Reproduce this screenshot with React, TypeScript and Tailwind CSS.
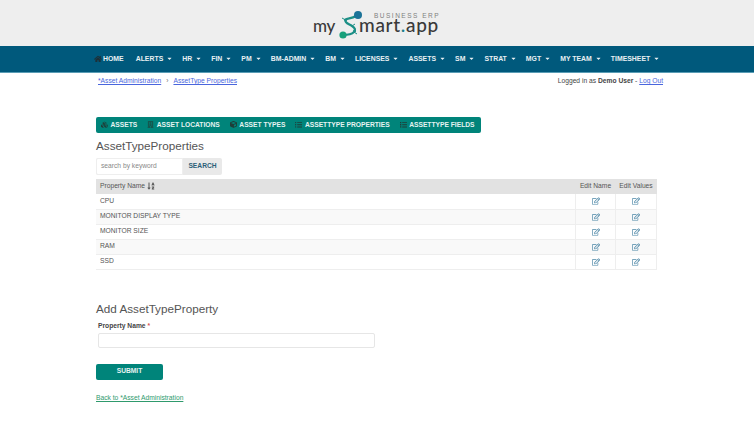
import { FaHome, FaCaretDown, FaRegEdit, FaCubes, FaBuilding, FaCube, FaListUl, FaList, FaSortAlphaDown } from "react-icons/fa"

const navItems = ["ALERTS", "HR", "FIN", "PM", "BM-ADMIN", "BM", "LICENSES", "ASSETS", "SM", "STRAT", "MGT", "MY TEAM", "TIMESHEET"]

const tabs = [
  { label: "ASSETS", icon: <FaCubes className="text-[7.5px] text-[#1f3d38]" /> },
  { label: "ASSET LOCATIONS", icon: <FaBuilding className="text-[7px] text-[#14584f]" /> },
  { label: "ASSET TYPES", icon: <FaCube className="text-[7px] text-[#1f3d38]" /> },
  { label: "ASSETTYPE PROPERTIES", icon: <FaListUl className="text-[7.5px] text-[#1f3d38]" /> },
  { label: "ASSETTYPE FIELDS", icon: <FaList className="text-[7.5px] text-[#1f3d38]" /> },
]

const rows = ["CPU", "MONITOR DISPLAY TYPE", "MONITOR SIZE", "RAM", "SSD"]

function Logo() {
  return (
    <div className="relative w-[126px] mr-[2px] font-['Lato',sans-serif] font-medium text-[#3a3a3a]">
      <div className="h-[4px] pl-[61px] text-[6.5px] leading-[4px] tracking-[1.5px] text-[#808080] whitespace-nowrap font-['Liberation_Sans',sans-serif]">
        BUSINESS ERP
      </div>
      <div className="flex items-baseline h-[12px] mt-[1px] text-[19px] leading-[12px] whitespace-nowrap">
        <span className="w-[46px] text-[17px] tracking-[-0.3px]">my</span>
        <span className="tracking-[0.7px]">
          mart<span className="text-[#1c7f8c]">.</span>app
        </span>
      </div>
      <svg className="absolute left-[22px] top-[-4px]" width="28" height="30" viewBox="0 0 28 30" fill="none">
        <path d="M21 6 C16 9 12 8 10.5 10 C9.5 13 14 14 17 16 C20 18 21 20 19 22 C16 25 12 25 8 25" stroke="#1c8f86" strokeWidth="2.2" />
        <path d="M17 16 L20 14 M10.5 10 L7 8 M19 22 L22 24" stroke="#1c8f86" strokeWidth="1" />
        <circle cx="23" cy="5" r="4" fill="#1b7398" />
        <circle cx="8" cy="25" r="3.6" fill="#17a07a" />
        <circle cx="19.5" cy="21" r="1.5" fill="#1c8f86" />
        <circle cx="10.5" cy="10" r="1.4" fill="#1c8f86" />
      </svg>
    </div>
  )
}

export default function App() {
  return (
    <div className="w-[754px] h-[424px] overflow-hidden bg-white font-['Liberation_Sans',Arial,sans-serif] text-[#333]">
      <div className="h-[46px] bg-[#eeeeee] flex justify-center pt-[14px]">
        <Logo />
      </div>

      <nav className="h-[27px] bg-[#00597c] border-b border-[#5a9db5] flex items-center pl-[94px] text-[6.9px] font-bold text-[#e8f0f3] whitespace-nowrap">
        <FaHome className="text-[8px] text-[#1d3038] mr-[1px]" />
        <span>HOME</span>
        {navItems.map((label, i) => (
          <span key={label} className={`${i === 0 ? "ml-[12px]" : "ml-[9px]"} flex items-center gap-[3px]`}>
            {label}
            <FaCaretDown className="text-[7px]" />
          </span>
        ))}
      </nav>

      <div className="flex justify-between pl-[98px] pr-[91px] mt-[3px] text-[6.7px] leading-[10px]">
        <div className="flex items-center text-[#4a66dd]">
          <a className="underline">*Asset Administration</a>
          <span className="mx-[5px] text-[#777]">›</span>
          <a className="underline">AssetType Properties</a>
        </div>
        <div className="text-[#444]">
          Logged in as <b>Demo User</b> - <a className="underline text-[#4a66dd]">Log Out</a>
        </div>
      </div>

      <div className="pl-[96px] pr-[97px] mt-[31px]">
        <div className="flex w-fit items-center h-[16px] rounded-[2px] bg-[#00847a] pl-[5px] pr-[6px] gap-[10px] text-[6.7px] font-bold text-[#e6f3f1] whitespace-nowrap">
          {tabs.map((tab) => (
            <span key={tab.label} className="flex items-center gap-[2.5px]">
              <span className="flex w-[7px] justify-center">{tab.icon}</span>
              {tab.label}
            </span>
          ))}
        </div>

        <h2 className="text-[11.7px] leading-[16px] mt-[5px] text-[#555]">AssetTypeProperties</h2>

        <div className="flex mt-[4px] h-[17px] w-[126px] rounded-[2px] bg-[#e9e9e9] text-[6.7px]">
          <div className="w-[87px] bg-white border border-[#eeeeee] rounded-l-[2px] flex items-center pl-[4px] text-[#888]">
            search by keyword
          </div>
          <div className="flex-1 flex items-center justify-center font-bold text-[#2b5f78]">SEARCH</div>
        </div>

        <table className="w-[561px] mt-[4px] border-collapse text-[6.7px] text-[#555] table-fixed">
          <thead>
            <tr className="h-[15px] bg-[#e2e2e2]">
              <th className="text-left font-normal pl-[4px]">
                <span className="inline-flex items-center gap-[2px]">
                  Property Name <FaSortAlphaDown className="text-[8px] text-[#555]" />
                </span>
              </th>
              <th className="w-[40px] font-normal">Edit Name</th>
              <th className="w-[41px] font-normal">Edit Values</th>
            </tr>
          </thead>
          <tbody>
            {rows.map((row, i) => (
              <tr key={row} className={`h-[15px] ${i % 2 ? "bg-[#f9f9f9]" : "bg-white"}`}>
                <td className="pl-[4px] border-b border-[#eeeeee]">{row}</td>
                <td className="border border-t-0 border-[#eeeeee]">
                  <FaRegEdit className="mx-auto text-[8px] text-[#4b86a6]" />
                </td>
                <td className="border border-t-0 border-[#eeeeee]">
                  <FaRegEdit className="mx-auto text-[8px] text-[#4b86a6]" />
                </td>
              </tr>
            ))}
          </tbody>
        </table>

        <h2 className="text-[11.7px] leading-[16px] mt-[31px] text-[#555]">Add AssetTypeProperty</h2>

        <div className="mt-[4px] ml-[2px] text-[6.7px] leading-[10px] font-bold text-[#444]">
          Property Name <span className="text-[#d9534f]">*</span>
        </div>
        <div className="mt-[2px] ml-[2px] w-[277px] h-[15px] rounded-[2px] border border-[#e6e6e6] bg-white" />

        <button className="mt-[16px] block w-[67px] h-[16px] rounded-[2px] bg-[#00847a] text-[6.7px] font-bold text-[#e6f3f1]">
          SUBMIT
        </button>

        <a className="block mt-[13px] text-[6.7px] leading-[10px] underline text-[#2f9a6d]">Back to *Asset Administration</a>
      </div>
    </div>
  )
}
